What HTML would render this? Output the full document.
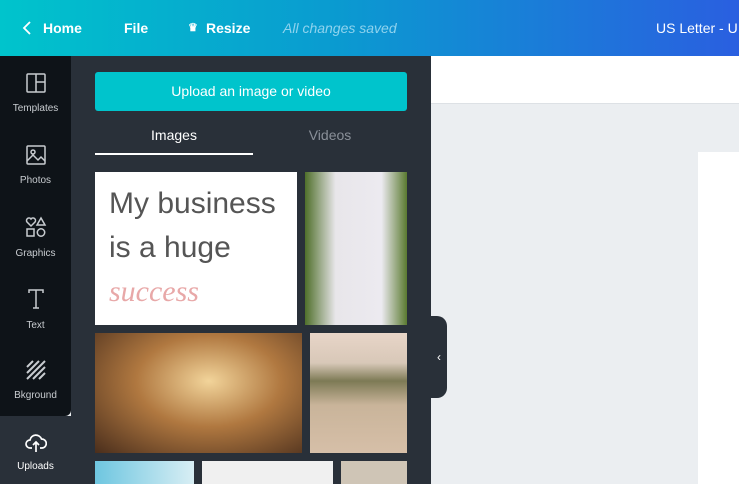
<!DOCTYPE html>
<html><head><style>
*{margin:0;padding:0;box-sizing:border-box}
body{width:739px;height:484px;overflow:hidden;font-family:"Liberation Sans",sans-serif;background:#ebeef1;position:relative}
.top{position:absolute;left:0;top:0;width:739px;height:56px;background:linear-gradient(90deg,#00c4cc 0%,#0a9bd0 45%,#2a5fe0 100%);color:#fff;font-size:14px;font-weight:bold}
.top span{position:absolute;top:20px}
.side{position:absolute;left:0;top:56px;width:71px;height:360px;background:#0e1318;border-bottom-right-radius:6px}
.panel{position:absolute;left:71px;top:56px;width:360px;height:428px;background:#293039}
.up{position:absolute;left:0;top:416px;width:71px;height:68px;background:#293039}
.it{position:absolute;left:0;width:71px;text-align:center;color:#c8ccd0;font-size:10px}
.it svg{display:block;margin:0 auto 10px}
.img{position:absolute}
</style></head><body>
<div class="top">
<svg style="position:absolute;left:22px;top:21px" width="10" height="14" viewBox="0 0 10 14" fill="none" stroke="#fff" stroke-width="1.8"><path d="M8 1L2 7l6 6"/></svg>
<span style="left:43px">Home</span>
<span style="left:124px">File</span>
<span style="left:188px;font-size:11px;top:21px">♛</span>
<span style="left:206px">Resize</span>
<span style="left:283px;font-weight:normal;font-style:italic;color:#8fd3ee;font-size:14px">All changes saved</span>
<span style="left:656px;font-weight:normal">US Letter - U</span>
</div>
<div style="position:absolute;left:431px;top:56px;width:308px;height:48px;background:#fff;border-bottom:1px solid #dde1e5"></div>
<div style="position:absolute;left:698px;top:152px;width:41px;height:332px;background:#fff"></div>
<div class="side"></div>
<div class="up"></div>
<div class="it" style="top:73px"><svg width="20" height="20" viewBox="0 0 20 20" fill="none" stroke="#c8ccd0" stroke-width="1.5"><rect x="1" y="1" width="18" height="18" rx="1"/><path d="M10 1v18M10 9h9"/></svg>Templates</div>
<div class="it" style="top:145px"><svg width="20" height="20" viewBox="0 0 20 20" fill="none" stroke="#c8ccd0" stroke-width="1.5"><rect x="1" y="1" width="18" height="18" rx="1"/><circle cx="7" cy="7" r="2"/><path d="M1 16l6-6 5 5 3-3 4 4"/></svg>Photos</div>
<div class="it" style="top:216px"><svg width="22" height="22" viewBox="0 0 22 22" fill="none" stroke="#c8ccd0" stroke-width="1.5"><path d="M6 10L2 6a2.3 2.3 0 014-3 2.3 2.3 0 014 3z"/><path d="M16 2l4 7h-8z"/><rect x="2" y="13" width="7" height="7"/><circle cx="16" cy="16.5" r="3.7"/></svg>Graphics</div>
<div class="it" style="top:288px"><svg width="20" height="22" viewBox="0 0 20 22" fill="none" stroke="#c8ccd0" stroke-width="1.5"><path d="M3 5V2h14v3M10 2v18M7 20h6"/></svg>Text</div>
<div class="it" style="top:360px"><svg width="20" height="20" viewBox="0 0 20 20" fill="none" stroke="#c8ccd0" stroke-width="2"><path d="M1 7L7 1M1 13L13 1M1 19L19 1M7 19L19 7M13 19l6-6"/></svg>Bkground</div>
<div class="it" style="top:433px;color:#fff"><svg width="22" height="20" viewBox="0 0 22 20" fill="none" stroke="#fff" stroke-width="1.7" style="margin-bottom:8px"><path d="M7 15H5a4 4 0 010-8 6 6 0 0111.5-1A4.5 4.5 0 0117 15h-2M11 9v10M8 12l3-3 3 3"/></svg>Uploads</div>
<div class="panel">
<div style="position:absolute;left:24px;top:16px;width:312px;height:39px;background:#00c4cc;border-radius:3px;color:#fff;font-size:14px;text-align:center;line-height:39px">Upload an image or video</div>
<div style="position:absolute;left:24px;top:71px;width:158px;text-align:center;color:#fff;font-size:14px">Images</div>
<div style="position:absolute;left:182px;top:71px;width:154px;text-align:center;color:#8a9099;font-size:14px">Videos</div>
<div style="position:absolute;left:24px;top:97px;width:158px;height:2px;background:#fff"></div>
</div>
<div class="img" style="left:95px;top:172px;width:202px;height:153px;background:#fff;color:#555;font-size:30px;line-height:44px;padding:10px 0 0 14px">My business<br>is a huge<br><span style="font-style:italic;color:#e8a8a8;font-family:'Liberation Serif',serif">success</span></div>
<div class="img" style="left:305px;top:172px;width:102px;height:153px;background:linear-gradient(90deg,#4f6f2a,#e8e6ea 30%,#eceaf0 75%,#5a7a30)"></div>
<div class="img" style="left:95px;top:333px;width:207px;height:120px;background:radial-gradient(ellipse at 55% 40%,#f2d49a,#b07840 45%,#4a2e1c)"></div>
<div class="img" style="left:310px;top:333px;width:97px;height:120px;background:linear-gradient(180deg,#e8d5c8 0%,#d8c8b8 25%,#7d7a55 40%,#c9b49a 60%,#d6bfa8)"></div>
<div class="img" style="left:95px;top:461px;width:99px;height:23px;background:linear-gradient(90deg,#6ec6e0,#d8eef4)"></div>
<div class="img" style="left:202px;top:461px;width:131px;height:23px;background:#f0f0f0"></div>
<div class="img" style="left:341px;top:461px;width:66px;height:23px;background:#cfc5b6"></div>
<div style="position:absolute;left:431px;top:316px;width:16px;height:82px;background:#293039;border-radius:0 10px 10px 0;color:#fff;font-size:12px;line-height:82px;text-align:center">&#8249;</div>
</body></html>
